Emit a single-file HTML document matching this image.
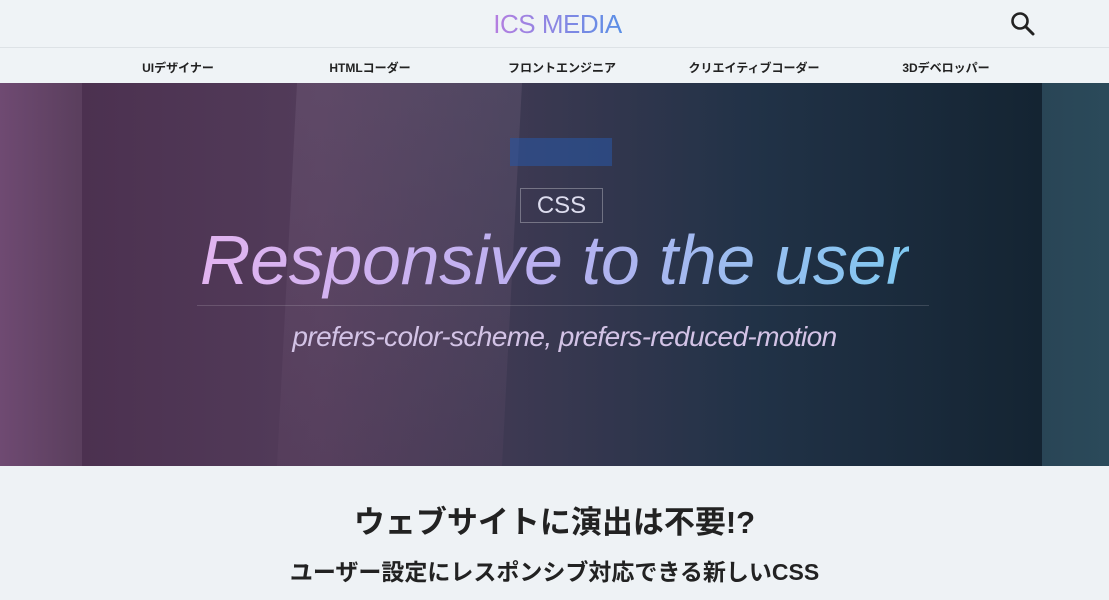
<!DOCTYPE html>
<html><head><meta charset="utf-8"><style>
*{margin:0;padding:0;box-sizing:border-box}
body{width:1109px;height:600px;overflow:hidden;background:#eef2f5;font-family:"Liberation Sans","Noto Sans CJK JP",sans-serif}
.top{height:48px;border-bottom:1px solid #dde2e6;position:relative;background:#eff3f6}
.logo{position:absolute;left:6px;right:0;top:9px;text-align:center;font-size:26px;font-weight:300;letter-spacing:-0.5px}
.logo span{background:linear-gradient(90deg,#b67ee0,#5a8fe6);-webkit-background-clip:text;color:transparent}
.search{position:absolute;left:1010px;top:11px}
.nav{height:35px;position:relative;background:#eff3f6}
.nav div{position:absolute;top:11px;font-size:12px;font-weight:bold;color:#222;transform:translateX(-50%)}
.hero{position:absolute;top:83px;left:0;width:1109px;height:383px;background:linear-gradient(90deg,#6f4a72 0%,#5b3f5e 7%,#3a2c48 40%,#23364a 75%,#2b4a5a 100%);overflow:hidden}
.inner{position:absolute;left:82px;width:960px;top:0;height:383px;background:linear-gradient(90deg,#4c3150 0%,#523c5a 25%,#3d3952 45%,#213247 70%,#142432 100%)}
.panel{position:absolute;left:205px;top:0;width:225px;height:383px;background:linear-gradient(180deg,rgba(140,120,150,.22),rgba(110,80,110,.15));transform:skewX(-3deg)}
.blue{position:absolute;left:428px;top:55px;width:102px;height:28px;background:#2a55a0;opacity:.6}
.tag{position:absolute;left:520px;top:105px;width:83px;height:35px;border:1px solid rgba(255,255,255,.3);color:#dde;font-size:24px;text-align:center;line-height:33px;font-weight:300}
.title{position:absolute;left:0;width:1109px;top:137px;text-align:center;font-size:70px;font-style:italic;font-weight:300;letter-spacing:-0.3px}
.title span{background:linear-gradient(90deg,#e2b4f0,#b8b0f0 50%,#80c8f0);-webkit-background-clip:text;color:transparent}
.line{position:absolute;left:197px;width:732px;top:222px;border-top:1px solid rgba(255,255,255,.15)}
.sub{position:absolute;left:10px;width:1109px;top:238px;text-align:center;font-size:28px;font-style:italic;color:#d3c3e6;letter-spacing:-0.6px}
h1{position:absolute;top:497px;width:1109px;text-align:center;font-size:31px;color:#222;font-weight:bold}
h2{position:absolute;top:553px;width:1109px;text-align:center;font-size:23px;color:#222;font-weight:bold}
</style></head><body>
<div class="top"><div class="logo"><span>ICS MEDIA</span></div>
<svg class="search" width="26" height="26" viewBox="0 0 26 26"><circle cx="10" cy="10" r="7.5" fill="none" stroke="#222" stroke-width="2.6"/><path d="M15.5 15.5L23 23" stroke="#222" stroke-width="3" stroke-linecap="round"/></svg></div>
<div class="nav"><div style="left:178px">UIデザイナー</div><div style="left:370px">HTMLコーダー</div><div style="left:562px">フロントエンジニア</div><div style="left:754px">クリエイティブコーダー</div><div style="left:946px">3Dデベロッパー</div></div>
<div class="hero"><div class="inner"><div class="panel"></div><div class="blue"></div></div>
<div class="tag">CSS</div>
<div class="title"><span>Responsive to the user</span></div>
<div class="line"></div>
<div class="sub">prefers-color-scheme, prefers-reduced-motion</div></div>
<h1>ウェブサイトに演出は不要!?</h1>
<h2>ユーザー設定にレスポンシブ対応できる新しいCSS</h2>
</body></html>
